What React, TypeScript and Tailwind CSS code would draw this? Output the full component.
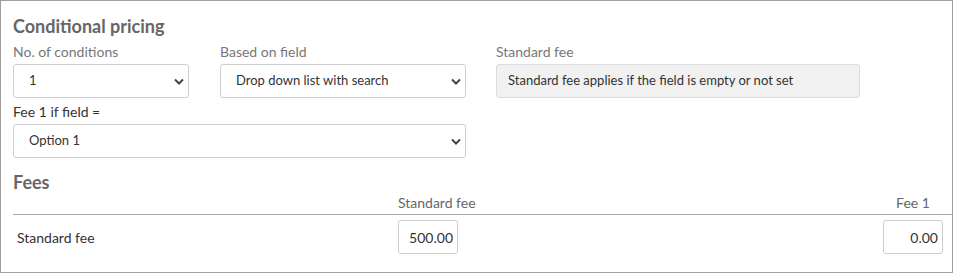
import React from "react";

const Chevron = () => (
  <svg width="10" height="7" viewBox="0 0 10 7" className="shrink-0">
    <path d="M1 1.5 L5 5.5 L9 1.5" fill="none" stroke="#444" strokeWidth="2" />
  </svg>
);

const Select = ({ text, className }: { text: string; className: string }) => (
  <div
    className={`h-[34px] border border-[#cfcfcf] rounded-[3px] bg-white flex items-center justify-between pl-[15px] pr-[4px] text-[13px] text-[#333] ${className}`}
  >
    <span>{text}</span>
    <Chevron />
  </div>
);

export default function App() {
  return (
    <div
      className="w-[953px] h-[273px] border border-[#a0a0a0] bg-white pl-3 pt-[14px] flex flex-col"
      style={{ fontFamily: "Lato, 'Open Sans', sans-serif" }}
    >
      <div className="text-[18px] leading-[22px] font-bold text-[#666]">Conditional pricing</div>
      <div className="flex mt-[6px]">
        <div className="w-[176px] flex flex-col">
          <div className="text-[14px] leading-[17px] text-[#777]">No. of conditions</div>
          <Select text="1" className="mt-[4px] w-[176px]" />
        </div>
        <div className="ml-[31px] flex flex-col">
          <div className="text-[14px] leading-[17px] text-[#777]">Based on field</div>
          <Select text="Drop down list with search" className="mt-[4px] w-[246px]" />
        </div>
        <div className="ml-[30px] flex flex-col">
          <div className="text-[14px] leading-[17px] text-[#777]">Standard fee</div>
          <div className="mt-[4px] w-[364px] h-[34px] border border-[#dcdcdc] rounded-[3px] bg-[#f1f1f1] flex items-center pl-[11px] text-[13px] text-[#333]">
            Standard fee applies if the field is empty or not set
          </div>
        </div>
      </div>
      <div className="mt-[5px] text-[14px] leading-[17px] text-[#333]">Fee 1 if field =</div>
      <Select text="Option 1" className="mt-[4px] w-[453px]" />
      <div className="mt-[13px] text-[18px] leading-[22px] font-bold text-[#666]">Fees</div>
      <div className="flex mt-[1px] h-[21px] border-b border-[#a8a8a8] text-[14px] leading-[17px] text-[#666]">
        <div className="w-[385px]" />
        <div className="w-[80px]">Standard fee</div>
        <div className="flex-1" />
        <div className="w-[60px] text-center mr-[9px]">Fee 1</div>
      </div>
      <div className="flex items-center mt-[5px] text-[14px] text-[#333]">
        <div className="w-[385px] pl-[4px]">Standard fee</div>
        <div className="w-[60px] h-[34px] border border-[#cfcfcf] rounded-[3px] flex items-center justify-end pr-[4px]">500.00</div>
        <div className="flex-1" />
        <div className="w-[60px] h-[34px] border border-[#cfcfcf] rounded-[3px] flex items-center justify-end pr-[4px] mr-[9px]">0.00</div>
      </div>
    </div>
  );
}
